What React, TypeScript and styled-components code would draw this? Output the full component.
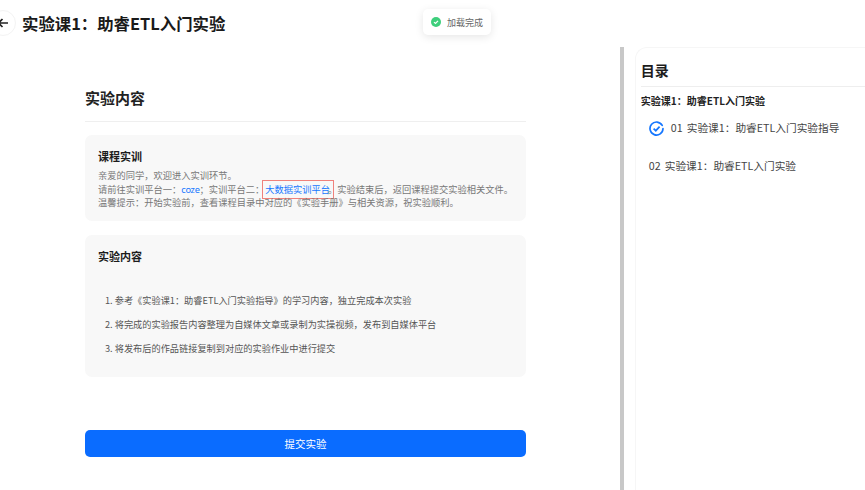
import * as React from "react";
import styled, { createGlobalStyle } from "styled-components";

const GlobalStyle = createGlobalStyle`
  html, body {
    margin: 0;
    padding: 0;
    height: 100%;
    overflow: hidden;
    background: #fff;
  }
  body {
    font-family: "Noto Sans CJK SC", "Noto Sans", sans-serif;
    color: #1c1c1c;
  }
`;

const Page = styled.div`
  position: relative;
  width: 865px;
  height: 490px;
  overflow: hidden;
`;

const Header = styled.header`
  display: flex;
  align-items: center;
  height: 46px;
  gap: 6px;
  margin-left: -10px;
`;

const BackButton = styled.button`
  display: flex;
  align-items: center;
  justify-content: center;
  width: 26px;
  height: 26px;
  padding: 0;
  border: 1px solid #f3f3f3;
  border-radius: 50%;
  background: #fff;
  color: #222;
`;

const PageTitle = styled.h1`
  margin: 0;
  font-size: 16.4px;
  line-height: 24px;
  font-weight: 700;
  color: #1a1a1a;
`;

const Toast = styled.div`
  position: absolute;
  top: 9px;
  left: 423px;
  display: flex;
  align-items: center;
  gap: 6px;
  height: 26px;
  padding: 0 8px;
  border-radius: 5px;
  background: #fff;
  box-shadow: 0 2px 9px rgba(0, 0, 0, 0.1);
  font-size: 9px;
  color: #666;
`;

const Body = styled.div`
  display: flex;
  height: 444px;
`;

const Main = styled.main`
  width: 441px;
  margin-left: 85px;
  padding-top: 41px;
`;

const SectionTitle = styled.h2`
  margin: 0;
  padding-bottom: 12px;
  border-bottom: 1px solid #efefef;
  font-size: 15px;
  line-height: 22px;
  font-weight: 700;
  color: #222;
`;

const Card = styled.section<{ $height: number; $top: number }>`
  box-sizing: border-box;
  height: ${(p) => p.$height}px;
  margin-top: ${(p) => p.$top}px;
  padding: 14px 13px;
  border-radius: 7px;
  background: #f8f8f8;
`;

const CardTitle = styled.h3`
  margin: 0;
  font-size: 11px;
  line-height: 15px;
  font-weight: 700;
  color: #1c1c1c;
`;

const Intro = styled.div`
  margin-top: 5px;
  font-size: 9.25px;
  line-height: 13.5px;
  color: #777;
  white-space: nowrap;
`;

const PlainLink = styled.span`
  color: #1677ff;
  font-family: "Noto Sans", sans-serif;
  letter-spacing: -0.3px;
`;

const MarkedLink = styled.span`
  display: inline-block;
  box-sizing: border-box;
  height: 17px;
  margin: -3px -5px -3px -1px;
  padding: 0 3px 0 2px;
  line-height: 17px;
  vertical-align: baseline;
  outline: 1px solid #f0817c;
  color: #1677ff;
`;

const Steps = styled.ol`
  display: flex;
  flex-direction: column;
  gap: 11px;
  margin: 30px 0 0;
  padding: 0 0 0 7px;
  list-style: none;
  font-size: 9.2px;
  line-height: 13px;
  color: #555;
`;

const SubmitButton = styled.button`
  display: block;
  width: 100%;
  height: 27px;
  margin-top: 53px;
  border: none;
  border-radius: 5px;
  background: #0a6cff;
  color: #fff;
  font-family: inherit;
  font-size: 10.5px;
`;

const Scrollbar = styled.div`
  width: 4px;
  height: 443px;
  margin: 1px 0 0 94px;
  background: #c8c8c8;
`;

const Catalog = styled.aside`
  box-sizing: border-box;
  width: 240px;
  margin: 1px 0 0 11px;
  padding: 11px 0 0 5px;
  border: 1px solid #f6f6f6;
  border-right: none;
  border-bottom: none;
  border-top-left-radius: 12px;
`;

const CatalogTitle = styled.h2`
  margin: 0;
  padding-bottom: 5px;
  border-bottom: 1px solid #eee;
  font-size: 14px;
  line-height: 22px;
  font-weight: 700;
  color: #1c1c1c;
`;

const ChapterName = styled.div`
  margin-top: 6px;
  font-size: 10px;
  line-height: 16px;
  font-weight: 700;
  color: #222;
`;

const Lesson = styled.div<{ $indent: number; $top: number }>`
  display: flex;
  align-items: center;
  gap: 7px;
  margin: ${(p) => p.$top}px 0 0 ${(p) => p.$indent}px;
  font-size: 10.7px;
  line-height: 16px;
  color: #444;
  white-space: nowrap;
`;

const LessonLabel = styled.span`
  display: flex;
  gap: 4px;
`;

const BackIcon = () => (
  <svg width="12" height="12" viewBox="0 0 12 12" fill="none" stroke="currentColor" strokeWidth="1.7">
    <path d="M11 6H1.5M5.5 2L1.5 6l4 4" />
  </svg>
);

const ToastIcon = () => (
  <svg width="10" height="10" viewBox="0 0 10 10">
    <circle cx="5" cy="5" r="5" fill="#3ecf7c" />
    <path d="M3 5.1l1.5 1.4L7 3.8" fill="none" stroke="#fff" strokeWidth="1.2" />
  </svg>
);

const DoneIcon = () => (
  <svg width="15" height="15" viewBox="0 0 15 15" fill="none" stroke="#1677ff">
    <path d="M13.2 4.4A6.5 6.5 0 1 0 14 7.5" strokeWidth="1.7" strokeLinecap="round" />
    <path d="M4.6 7.6l2.2 2.1 3.8-4" strokeWidth="1.7" />
  </svg>
);

const App: React.FC = () => {
  return (
    <Page>
      <GlobalStyle />
      <Header>
        <BackButton aria-label="返回">
          <BackIcon />
        </BackButton>
        <PageTitle>实验课1：助睿ETL入门实验</PageTitle>
      </Header>
      <Toast>
        <ToastIcon />
        加载完成
      </Toast>
      <Body>
        <Main>
          <SectionTitle>实验内容</SectionTitle>
          <Card $height={86} $top={13}>
            <CardTitle>课程实训</CardTitle>
            <Intro>
              亲爱的同学，欢迎进入实训环节。
              <br />
              请前往实训平台一：<PlainLink>coze</PlainLink>；实训平台二：
              <MarkedLink>大数据实训平台</MarkedLink>。实验结束后，返回课程提交实验相关文件。
              <br />
              温馨提示：开始实验前，查看课程目录中对应的《实验手册》与相关资源，祝实验顺利。
            </Intro>
          </Card>
          <Card $height={142} $top={14}>
            <CardTitle>实验内容</CardTitle>
            <Steps>
              <li>1. 参考《实验课1：助睿ETL入门实验指导》的学习内容，独立完成本次实验</li>
              <li>2. 将完成的实验报告内容整理为自媒体文章或录制为实操视频，发布到自媒体平台</li>
              <li>3. 将发布后的作品链接复制到对应的实验作业中进行提交</li>
            </Steps>
          </Card>
          <SubmitButton>提交实验</SubmitButton>
        </Main>
        <Scrollbar />
        <Catalog>
          <CatalogTitle>目录</CatalogTitle>
          <ChapterName>实验课1：助睿ETL入门实验</ChapterName>
          <Lesson $indent={8} $top={11}>
            <DoneIcon />
            <LessonLabel>
              <span>01</span>
              <span>实验课1：助睿ETL入门实验指导</span>
            </LessonLabel>
          </Lesson>
          <Lesson $indent={8} $top={22}>
            <LessonLabel>
              <span>02</span>
              <span>实验课1：助睿ETL入门实验</span>
            </LessonLabel>
          </Lesson>
        </Catalog>
      </Body>
    </Page>
  );
};

export default App;
